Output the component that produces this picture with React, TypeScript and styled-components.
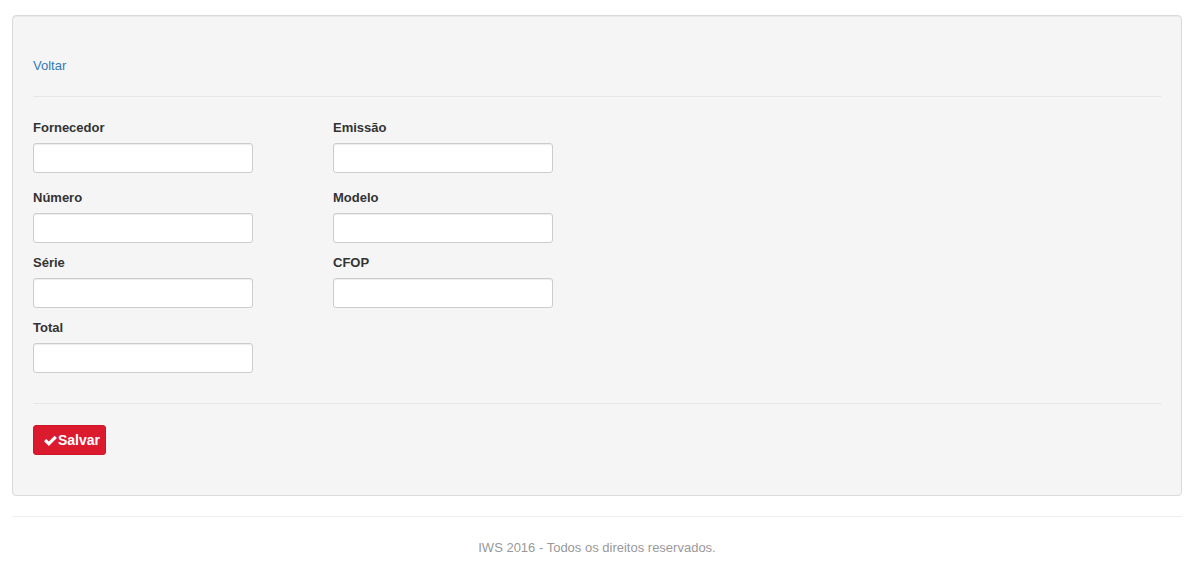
import React from 'react';
import styled, { createGlobalStyle } from 'styled-components';

const GlobalStyle = createGlobalStyle`
  html, body {
    margin: 0;
    padding: 0;
    background: #fff;
    font-family: "Liberation Sans", Arial, Helvetica, sans-serif;
    font-size: 13px;
    line-height: 20px;
    color: #333;
  }
  * { box-sizing: border-box; }
`;

const Container = styled.div`
  width: 1170px;
  margin: 0 0 0 12px;
  padding-top: 15px;
`;

const Well = styled.div`
  display: flex;
  flex-direction: column;
  align-items: flex-start;
  background: #f5f5f5;
  border: 1px solid #dadada;
  border-radius: 4px;
  box-shadow: inset 0 1px 1px rgba(0, 0, 0, 0.05);
  padding: 40px 20px 40px;
  margin-bottom: 20px;
`;

const BackLink = styled.a`
  color: #337ab7;
  text-decoration: none;
  font-size: 13px;
  line-height: 20px;
  cursor: pointer;
`;

const Divider = styled.hr`
  align-self: stretch;
  border: 0;
  border-top: 1px solid #e6e6e6;
  margin: 20px 0;
`;

const FormRow = styled.div<{ $gap: number }>`
  display: grid;
  grid-template-columns: 300px 300px;
  margin-bottom: ${p => p.$gap}px;
`;

const Field = styled.div`
  display: flex;
  flex-direction: column;
`;

const Label = styled.label`
  font-weight: bold;
  font-size: 13px;
  line-height: 21px;
  margin-bottom: 5px;
  color: #333;
`;

const TextInput = styled.input`
  width: 220px;
  height: 30px;
  border: 1px solid #ccc;
  border-radius: 3px;
  background: #fff;
  padding: 5px 10px;
  font-family: inherit;
  font-size: 13px;
  box-shadow: inset 0 1px 1px rgba(0, 0, 0, 0.075);
  outline: none;
`;

const SaveButton = styled.button`
  display: inline-flex;
  align-items: center;
  gap: 1px;
  height: 30px;
  width: 73px;
  margin-top: 1px;
  padding: 0 0 0 10px;
  background: #dc1a2e;
  border: 1px solid #cf1628;
  border-radius: 3px;
  color: #fff;
  font-family: inherit;
  font-weight: bold;
  font-size: 14px;
  cursor: pointer;
`;

const Footer = styled.footer`
  border-top: 1px solid #eee;
  text-align: center;
  color: #999;
  font-size: 13px;
  padding-top: 21px;
`;

const CheckIcon = () => (
  <svg width="13" height="11" viewBox="0 0 13 11">
    <path d="M0 6.2 L2.3 3.9 L4.9 6.5 L10.6 0.8 L12.9 3.1 L4.9 11 Z" fill="#fff" />
  </svg>
);

const rows = [
  { gap: 14, fields: ['Fornecedor', 'Emissão'] },
  { gap: 9, fields: ['Número', 'Modelo'] },
  { gap: 9, fields: ['Série', 'CFOP'] },
  { gap: 10, fields: ['Total'] },
];

export default function App() {
  return (
    <>
      <GlobalStyle />
      <Container>
        <Well>
          <BackLink>Voltar</BackLink>
          <Divider />
          {rows.map((row, i) => (
            <FormRow key={i} $gap={row.gap}>
              {row.fields.map(f => (
                <Field key={f}>
                  <Label>{f}</Label>
                  <TextInput type="text" />
                </Field>
              ))}
            </FormRow>
          ))}
          <Divider />
          <SaveButton>
            <CheckIcon />
            Salvar
          </SaveButton>
        </Well>
        <Footer>IWS 2016 - Todos os direitos reservados.</Footer>
      </Container>
    </>
  );
}
